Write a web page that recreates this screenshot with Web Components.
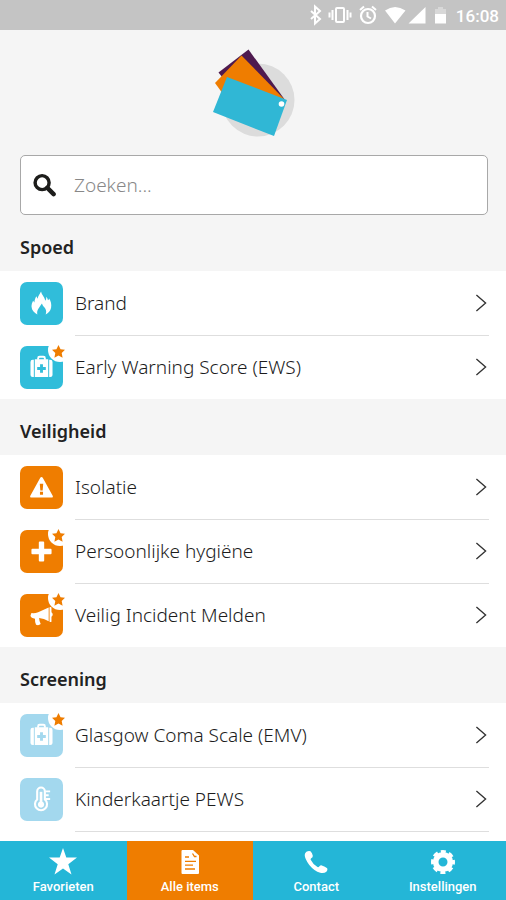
<!DOCTYPE html>
<html lang="nl">
<head>
<meta charset="utf-8">
<meta name="viewport" content="width=device-width, initial-scale=1">
<title>Alle items</title>
<style>
  html, body { height: 100%; }
  body { margin: 0; background: #fff; font-family: "Noto Sans", sans-serif; color: #1c1c1c; }
</style>
</head>
<body>
<card-app></card-app>
<script>
const define = (name, html, setup) => {
  const template = document.createElement('template');
  template.innerHTML = html;
  customElements.define(name, class extends HTMLElement {
    constructor() {
      super();
      this.attachShadow({ mode: 'open' }).append(template.content.cloneNode(true));
    }
    connectedCallback() { if (setup) setup(this, this.shadowRoot); }
  });
};

const ICONS = {
  badge: '<path fill="currentColor" d="M12 0l3.800 7.800 8.200.9-6.100 5.900 1.700 8.900L12 19.200l-7.600 4.300 1.700-8.900L0 8.700l8.200-.9z"/>',
  star: '<path fill="currentColor" d="M12-2l3.300 9.600H26l-8.700 6.600 3.200 10.300-8.500-6.100-8.500 6.100 3.200-10.300L-2 7.600H8.700z"/>',
  search: '<circle cx="9.500" cy="9" r="7.300" fill="none" stroke="currentColor" stroke-width="3.600"/><path d="M15 14.500l6.500 6.500" stroke="currentColor" stroke-width="4.600" stroke-linecap="round"/>',
  flame: '<path fill="currentColor" d="M11.500-.5c.5 3.500 3.600 5.500 4.500 9.500 1-1 1.100-2.300.8-4 1.100 1 1.700 2.200 2 3.500.6-.3 1.100-.9 1.200-1.600 1.700 2.700 2.700 6 2 9.500-.7 3.300-2.700 5.700-5.700 7.100.9-2.200.8-4.200-.4-6.300-1.200-1.800-2.900-3-3.400-5.200-1.500 1.500-2.300 3.500-3.600 5.200-1.400 1.900-1.800 4.200-1.200 6.300C4.300 22 1.800 19 1.600 15.500c-.1-2.700.7-4.500 1.600-6.500L4.600 11C4.700 8 5.700 6.300 6.600 4.500L8 7C8.300 4.200 10.400 2.200 11.500-.5z"/>',
  kit: '<path d="M8.500 4V2.300q0-1.500 1.500-1.500h4q1.500 0 1.500 1.500V4" fill="none" stroke="currentColor" stroke-width="2"/><path fill="currentColor" d="M2.800 4H4v18H2.800Q.5 22 .5 19.800V6.200Q.5 4 2.800 4zM20 4h1.200q2.300 0 2.300 2.200v13.600q0 2.200-2.300 2.200H20zM5 3.500h14V22H5zM10.500 8.500v3h-3v3h3v3h3v-3h3v-3h-3v-3z" fill-rule="evenodd"/>',
  warning: '<path fill="currentColor" fill-rule="evenodd" d="M12 1q.8 0 1.300.9l10.500 19q.6 1.600-1 1.600H1.200q-1.600 0-1-1.600l10.500-19Q11.200 1 12 1zM10.200 8l.6 7h2.400l.6-7zM10.400 16.500v3h3.200v-3z"/>',
  plus: '<path fill="currentColor" d="M9.200 2.500q0-1 1-1h3.600q1 0 1 1v6.700h6.700q1 0 1 1v3.600q0 1-1 1h-6.700v6.700q0 1-1 1h-3.600q-1 0-1-1v-6.700H2.500q-1 0-1-1v-3.600q0-1 1-1h6.700z"/>',
  horn: '<path fill="currentColor" d="M1.500 9.500Q5 10 8.500 8.700L19.500 3.700V18q-5-3-10-3.300.1 3.500 1.700 6.200-2.300 2-4.900.7-1.300-3-1.100-6.200L2.500 14.700Q.5 14 .5 12zM20.400 3.300q1.400-.5 2 .3v4.900q1.300.8 1.300 2.400t-1.300 2.400v5.100q-.8.9-2 .1z"/>',
  thermo: '<g fill="none" stroke="currentColor" stroke-width="2.200"><path d="M7.500 12V3.500a4 4 0 0 1 8 0V12a6.300 6.300 0 1 1-8 0z"/><path d="M16 3.500h5M16 7.500h3.500M16 11.500h5" stroke-width="2"/></g><path d="M11.500 4v12" stroke="currentColor" stroke-width="2.800"/><circle cx="11.500" cy="17.300" r="3.200" fill="currentColor"/>',
  file: '<path fill="currentColor" d="M4.500 0H15L21 5.500V23q0 1-1 1H4.500q-1 0-1-1V1q0-1 1-1z"/><path d="M7 7h4M7 11.300h11M7 15.200h8M7 19h10M14.500 3.500l2 3h2" stroke="#ef7d00" stroke-width="1.300" fill="none"/>',
  phone: '<path fill="currentColor" d="M2.400 1.800Q4.500.4 6.500 1.200q1.800 1.500 2.300 4.500.2 1.600-1.600 2.600-.9.500-.5 1.500 2.500 5 6.800 7.300 1 .4 1.700-.5 1.200-1.500 2.600-1.200 3.400.9 5.400 2.900.9 1.600-.8 3.400-2.300 2-6.200 1.100Q10.300 21 5.300 14.900.8 9 .7 5 .8 3 2.400 1.800z"/>',
  gear: '<g fill="none" stroke="currentColor"><circle cx="12" cy="12" r="7.300" stroke-width="5.600"/><circle cx="12" cy="12" r="10.500" stroke-width="3" stroke-dasharray="5 3.247" stroke-dashoffset="2.500"/></g>',
  chevron: '<path d="M6.500 2.500L17.500 12l-11 9.500" fill="none" stroke="currentColor" stroke-width="1.600"/>'
};

define('ui-icon', `
  <style>
    :host { display: block; width: var(--icon-size, 24px); height: var(--icon-size, 24px); flex: none; }
    svg { display: block; width: 100%; height: 100%; overflow: visible; }
  </style>
  <svg viewBox="0 0 24 24" aria-hidden="true"></svg>`,
  (el, root) => { root.querySelector('svg').innerHTML = ICONS[el.getAttribute('name')]; });

define('status-bar', `
  <style>
    :host { display: flex; align-items: center; justify-content: flex-end; height: 30px; flex: none;
      padding-right: 7px; background: #c4c4c4; color: #fff; font: 500 17px/30px Roboto, sans-serif; }
    svg { display: block; width: 144px; height: 24px; margin-right: 4px; }
    time { padding-top: 1px; }
  </style>
  <svg viewBox="0 0 144 24" fill="none" stroke="#fff" aria-hidden="true">
    <path d="M3 8l9 8-5 4.500v-17L12 8l-9 8" stroke-width="2"/>
    <rect x="28" y="5" width="8" height="14" rx="1" stroke-width="2"/>
    <path d="M24.500 7v10M39.500 7v10M21.500 9.500v5M42.500 9.500v5" stroke-width="2"/>
    <circle cx="60" cy="13" r="7" stroke-width="2.200"/><path d="M59.500 9v4.500l3.500 2M52 7l4-3.500M68 7l-4-3.500" stroke-width="2"/>
    <path d="M77 7.500Q87 .5 97.500 7.500L87 20.500zM117.500 4v16.500h-17z" fill="#fff" stroke="none"/>
    <path d="M127 6h3V4h5v2h3v14h-11z" fill="#fff" fill-opacity=".35" stroke="none"/><path d="M127 11h11v9.500h-11z" fill="#fff" stroke="none"/>
  </svg>
  <time>16:08</time>`);

define('app-logo', `
  <style>
    :host { display: block; width: 110px; height: 105px; }
    svg { display: block; width: 100%; height: 100%; }
  </style>
  <svg viewBox="0 0 110 105" role="img" aria-label="Kaartjes">
    <circle cx="59" cy="60" r="36.500" fill="#dcdcdc"/>
    <path d="M19.500 32.500L49.500 9.500 86 60 40 58z" fill="#4e1a4f"/>
    <path d="M16 43L42.500 15.500 86 60 60 75 24 54z" fill="#ef7d00"/>
    <path d="M28 37L88 60 75 96 14 72z" fill="#30b7d5"/>
    <circle cx="82.500" cy="64" r="2.800" fill="#fff"/>
  </svg>`);

define('search-field', `
  <style>
    :host { display: block; color: #1d1d1b; }
    label { display: flex; align-items: center; gap: 18px; height: 60px; box-sizing: border-box; padding: 0 12px;
      background: #fff; border: 1px solid #a8a8a8; border-radius: 5px; --icon-size: 23px; }
    input { flex: 1; min-width: 0; padding: 0; border: 0; outline: 0; background: none; font: 300 19px/24px "Noto Sans", sans-serif; color: #444; }
    input::placeholder { color: #888; opacity: 1; }
  </style>
  <label><ui-icon name="search"></ui-icon><input type="search" placeholder="Zoeken..." aria-label="Zoeken"></label>`);

define('item-group', `
  <style>
    :host { display: block; }
    h2 { display: flex; align-items: center; height: 56px; box-sizing: border-box; margin: 0; padding: 8px 20px 0;
      background: #f5f5f5; color: #222; font-size: 18px; line-height: 24px; font-weight: 600; }
    .rest { display: none; height: 10px; margin: 0 17px 0 75px; border-top: 1px solid #dedede; }
    :host([more]) .rest { display: block; }
  </style>
  <section><h2></h2><slot></slot><div class="rest"></div></section>`,
  (el, root) => { root.querySelector('h2').textContent = el.getAttribute('heading'); });

define('item-row', `
  <style>
    :host { display: block; --line: #dedede; }
    :host(:first-of-type) { --line: transparent; }
    a { display: flex; gap: 12px; padding: 0 17px 0 20px; color: inherit; text-decoration: none; }
    .tile { position: relative; display: grid; place-items: center; flex: none; width: 43px; height: 43px; margin-top: 11px;
      border-radius: 7px; background: var(--tile); color: #fff; --icon-size: 23px; }
    .badge { display: none; position: absolute; top: -8px; right: -9px; width: 24px; height: 24px; border-radius: 50%;
      background: #fff; color: #ef7d00; }
    .badge ui-icon { --icon-size: 13px; margin: 7px 0 0 4px; }
    :host([favourite]) .badge { display: block; }
    .body { display: flex; align-items: center; justify-content: space-between; flex: 1; min-width: 0; height: 64px;
      box-sizing: border-box; padding-bottom: 2px; border-top: 1px solid var(--line);
      font-size: 19px; font-weight: 300; line-height: 24px; --icon-size: 20px; }
    .body ui-icon { margin-right: -2px; color: #333; }
  </style>
  <a href="#"><span class="tile"><ui-icon></ui-icon><span class="badge"><ui-icon name="badge"></ui-icon></span></span>
    <span class="body"><slot></slot><ui-icon name="chevron"></ui-icon></span></a>`,
  (el, root) => {
    const icon = document.createElement('ui-icon');
    icon.setAttribute('name', el.getAttribute('icon'));
    root.querySelector('.tile > ui-icon:not([name])').replaceWith(icon);
  });

define('tab-item', `
  <style>
    :host { display: block; background: #24b6d7; color: #fff; }
    :host([active]) { background: #ef7d00; }
    a { display: flex; flex-direction: column; align-items: center; gap: 4px; padding: 9px 0 4px; color: inherit;
      text-decoration: none; font: 500 13px/18px Roboto, sans-serif; --icon-size: 24px; }
  </style>
  <a href="#"><slot name="icon"></slot><slot></slot></a>`,
  (el, root) => { if (el.hasAttribute('active')) root.querySelector('a').setAttribute('aria-current', 'page'); });

define('card-app', `
  <style>
    :host { display: flex; flex-direction: column; height: 100vh; }
    header { display: flex; flex-direction: column; padding: 10px 18px 0 20px; background: #f5f5f5; }
    app-logo { align-self: center; }
    search-field { margin-top: 10px; }
    main { flex: 1; min-height: 0; overflow: hidden; background: #fff; }
    nav { display: grid; grid-template-columns: repeat(4, 1fr); flex: none; }
    .urgent { --tile: #30bdda; } .safety { --tile: #ef7d00; } .screening { --tile: #a3d8ee; }
  </style>
  <status-bar></status-bar>
  <main>
    <header><app-logo></app-logo><search-field></search-field></header>
    <item-group class="urgent" heading="Spoed">
      <item-row icon="flame">Brand</item-row>
      <item-row icon="kit" favourite>Early Warning Score (EWS)</item-row>
    </item-group>
    <item-group class="safety" heading="Veiligheid">
      <item-row icon="warning">Isolatie</item-row>
      <item-row icon="plus" favourite>Persoonlijke hygiëne</item-row>
      <item-row icon="horn" favourite>Veilig Incident Melden</item-row>
    </item-group>
    <item-group class="screening" heading="Screening" more>
      <item-row icon="kit" favourite>Glasgow Coma Scale (EMV)</item-row>
      <item-row icon="thermo">Kinderkaartje PEWS</item-row>
    </item-group>
  </main>
  <nav>
    <tab-item><ui-icon slot="icon" name="star"></ui-icon>Favorieten</tab-item>
    <tab-item active><ui-icon slot="icon" name="file"></ui-icon>Alle items</tab-item>
    <tab-item><ui-icon slot="icon" name="phone"></ui-icon>Contact</tab-item>
    <tab-item><ui-icon slot="icon" name="gear"></ui-icon>Instellingen</tab-item>
  </nav>`);
</script>
</body>
</html>
